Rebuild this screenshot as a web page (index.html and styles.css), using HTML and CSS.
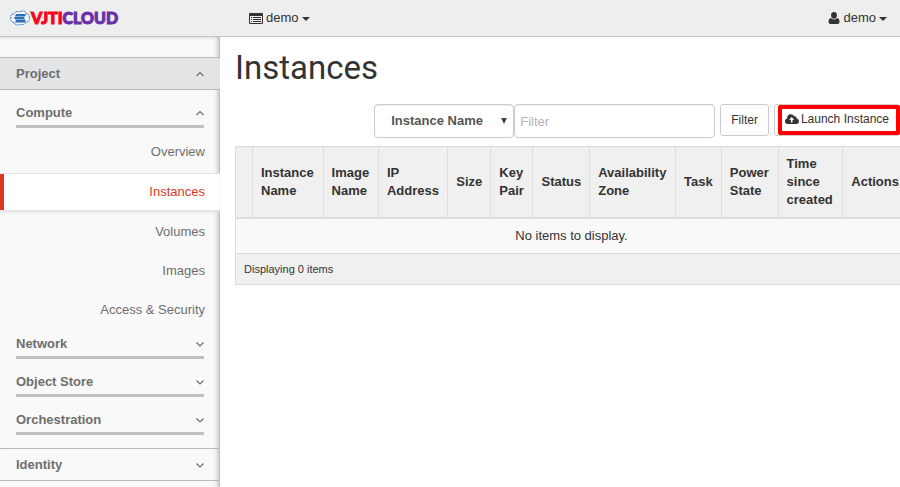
FILE: index.html
```html
<!DOCTYPE html>
<html lang="en">
<head>
<meta charset="utf-8">
<title>Instances</title>
<link rel="stylesheet" href="styles.css">
</head>
<body>
<header class="topbar">
  <a class="brand" href="#">
    <svg class="brand-mark" viewBox="0 0 20 16" width="20" height="16" aria-hidden="true">
      <path d="M4 12.500C1 12 0 10 1 8C0 5 2 4 4 4C5 1 8 1 10 2C12 0 16 1 16 3.500C19 4 20 6 19 8C20 10 18 12.500 16 12.500C14 15 11 15 10 14C8 16 5 15 4 12.500Z" fill="#f4f8fc" stroke="#3f78b5" stroke-dasharray="2 .6"/>
      <path d="M6 4h10l-1 2.500H5zM4 7h10l1 2.500H5zM6 10h10l-1 2.500H5z" fill="#2d6db3"/>
    </svg>
    <span class="brand-name"><span class="brand-red">VJTI</span><span class="brand-purple">CLOUD</span></span>
  </a>
  <button class="menu" type="button">
    <svg viewBox="0 0 14 11" width="14" height="11" aria-hidden="true">
      <path fill="#333" fill-rule="evenodd" d="M1 0H13Q14 0 14 1V10Q14 11 13 11H1Q0 11 0 10V1Q0 0 1 0ZM1 3V10H13V3Z"/>
      <path fill="#333" d="M2 4h1v1H2zM4 4h8v1H4zM2 6h1v1H2zM4 6h8v1H4zM2 8h1v1H2zM4 8h8v1H4z"/>
    </svg>
    demo <span class="caret"></span>
  </button>
  <button class="menu menu-user" type="button">
    <svg viewBox="0 0 12 12" width="12" height="12" aria-hidden="true">
      <path fill="#333" d="M6 0C8 0 9 1.500 9 3.300C9 5.200 7.700 6.800 6 6.800S3 5.200 3 3.300C3 1.500 4 0 6 0ZM3 6Q6 9 9 6C11 6.500 11.500 8 11.500 10Q11.500 12 9.500 12H2.500Q.5 12 .5 10C.5 8 1 6.500 3 6Z"/>
    </svg>
    demo <span class="caret"></span>
  </button>
</header>
<div class="layout">
  <nav class="sidebar">
    <button class="panel open" type="button">Project
      <svg class="chevron" viewBox="0 0 8 6" width="8" height="6" aria-hidden="true"><path d="M.5 5L4 1.500L7.500 5"/></svg>
    </button>
    <button class="group" type="button">Compute
      <svg class="chevron" viewBox="0 0 8 6" width="8" height="6" aria-hidden="true"><path d="M.5 5L4 1.500L7.500 5"/></svg>
    </button>
    <ul class="links">
      <li><a href="#">Overview</a></li>
      <li><a class="active" href="#" aria-current="page">Instances</a></li>
      <li><a href="#">Volumes</a></li>
      <li><a href="#">Images</a></li>
      <li><a href="#">Access &amp; Security</a></li>
    </ul>
    <button class="group" type="button">Network
      <svg class="chevron" viewBox="0 0 8 6" width="8" height="6" aria-hidden="true"><path d="M.5 1.500L4 5L7.500 1.500"/></svg>
    </button>
    <button class="group" type="button">Object Store
      <svg class="chevron" viewBox="0 0 8 6" width="8" height="6" aria-hidden="true"><path d="M.5 1.500L4 5L7.500 1.500"/></svg>
    </button>
    <button class="group" type="button">Orchestration
      <svg class="chevron" viewBox="0 0 8 6" width="8" height="6" aria-hidden="true"><path d="M.5 1.500L4 5L7.500 1.500"/></svg>
    </button>
    <button class="panel identity" type="button">Identity
      <svg class="chevron" viewBox="0 0 8 6" width="8" height="6" aria-hidden="true"><path d="M.5 1.500L4 5L7.500 1.500"/></svg>
    </button>
  </nav>
  <main class="content">
    <h1>Instances</h1>
    <form class="toolbar">
      <div class="field-select">
        <select aria-label="Filter by"><option>Instance Name</option></select>
        <span class="arrow" aria-hidden="true"></span>
      </div>
      <input class="query" type="text" placeholder="Filter" aria-label="Filter">
      <button class="btn filter" type="button">Filter</button>
      <div class="launch">
        <button class="btn" type="button">
          <svg viewBox="0 0 14 10" width="14" height="10" aria-hidden="true">
            <path fill="#333" fill-rule="evenodd" d="M3 10C1 10 0 8.700 0 7.200C0 5.800 .8 5 2 4.500C2 2 3.500 .2 5.700 .2C7.400 .2 8.600 1.100 9.200 2.500C10.500 2 11.700 3 11.500 4.500C13 4.800 14 5.800 14 7.300C14 8.900 12.900 10 11.300 10ZM6.700 3L4 5.700H5.900V8.500H7.500V5.700H9.400Z"/>
          </svg>
          Launch Instance
        </button>
        <span class="highlight"></span>
      </div>
    </form>
    <table>
      <thead>
        <tr>
          <th></th><th>Instance Name</th><th>Image Name</th><th>IP Address</th><th>Size</th><th>Key Pair</th><th>Status</th><th>Availability Zone</th><th>Task</th><th>Power State</th><th>Time since created</th><th>Actions</th>
        </tr>
      </thead>
      <tbody><tr><td class="empty" colspan="12">No items to display.</td></tr></tbody>
      <tfoot><tr><td colspan="12">Displaying 0 items</td></tr></tfoot>
    </table>
  </main>
</div>
</body>
</html>
```
FILE: styles.css
```css
* { box-sizing: border-box; }
body {
  margin: 0;
  height: 100vh;
  display: flex;
  flex-direction: column;
  overflow: hidden;
  background: #fff;
  color: #333;
  font: 13px/18px "Liberation Sans", Arial, sans-serif;
}
button, input, select { font: inherit; color: inherit; margin: 0; }
a { color: inherit; text-decoration: none; }

.topbar {
  display: flex;
  align-items: center;
  height: 37px;
  padding: 0 13px 0 10px;
  background: #eee;
  border-bottom: 1px solid #c3c3c3;
}
.brand { display: flex; align-items: center; width: 239px; }
.brand-name {
  margin-left: 1px;
  font: 900 16px/20px Lato, sans-serif;
  -webkit-text-stroke: 1px currentColor;
}
.brand-red { color: #f5051c; }
.brand-purple { color: #6b2fa8; }
.menu {
  display: flex;
  align-items: center;
  gap: 3px;
  padding: 0;
  border: 0;
  background: none;
}
.menu-user { margin-left: auto; }
.caret {
  border: 4px solid transparent;
  border-top-color: #333;
  border-bottom: 0;
  margin-top: 2px;
}

.layout { display: flex; flex: 1; min-height: 0; }
.sidebar {
  flex: 0 0 220px;
  margin-bottom: -10px;
  padding-top: 20px;
  background: #f9f9f9;
  color: #6e6e6e;
  box-shadow: inset -1px 0 #bfbfbf, inset -3px 0 5px -1px #bbb;
}
.panel, .group {
  display: flex;
  align-items: center;
  justify-content: space-between;
  font-weight: bold;
  text-align: left;
}
.panel {
  width: 100%;
  height: 33px;
  padding: 0 16px;
  border: solid #b8b9ba;
  border-width: 1px 0;
  background: none;
}
.panel.open { background: #e3e4e6; }
.group {
  width: calc(100% - 32px);
  height: 38px;
  margin: 0 16px;
  padding: 10px 0 0;
  border: 0;
  border-bottom: 3px solid #c0c0c0;
  background: none;
}
.identity { margin-top: 13px; }
.chevron { fill: none; stroke: #6e6e6e; stroke-width: 1.2px; }
.links { list-style: none; margin: 0; padding: 4px 0 0; text-align: right; }
.links a { display: block; padding: 10px 15px; line-height: 19px; }
.links li:last-child a { padding-bottom: 2px; }
.links .active {
  margin: 2px 0 1px;
  padding: 8px 15px 9px;
  border: solid #e3e3e3;
  border-width: 1px 0;
  background: linear-gradient(to right, #dc3826 4px, #fff 4px);
  color: #dc3826;
  box-shadow: 0 2px 3px -1px #ddd;
}

.content { flex: 1; min-width: 0; padding: 11px 0 0 15px; overflow: hidden; }
h1 { margin: 0 0 16px; font: 400 33px/40px Roboto, sans-serif; }
.toolbar { display: flex; align-items: flex-start; justify-content: flex-end; margin-bottom: 8px; }
.field-select { position: relative; width: 140px; }
.field-select select {
  width: 100%;
  height: 34px;
  padding: 0 16px;
  border: 1px solid #ccc;
  border-radius: 4px;
  background: #fff;
  color: #555;
  font-weight: bold;
  appearance: none;
  box-shadow: inset 0 1px 1px #eee;
}
.arrow {
  position: absolute;
  top: 14px;
  right: 7px;
  border: 3px solid transparent;
  border-top: 6px solid #444;
  border-bottom: 0;
}
.query {
  flex: 0 1 201px;
  min-width: 0;
  height: 34px;
  padding: 0 5px;
  border: 1px solid #ccc;
  border-radius: 4px;
  box-shadow: inset 0 1px 1px #eee;
}
.query::placeholder { color: #b5b5b5; opacity: 1; }
.btn {
  display: flex;
  align-items: center;
  gap: 2px;
  height: 32px;
  padding: 0 10px;
  border: 1px solid #ccc;
  border-radius: 3px;
  background: #fff;
  font-size: 12px;
  white-space: nowrap;
}
.filter { margin: 0 5px; }
.launch { position: relative; }
.launch .btn { padding-bottom: 2px; }
.highlight { position: absolute; inset: 1px 0 1px 4px; border: 4px solid #f00; border-radius: 2px; pointer-events: none; }

table {
  width: calc(100% + 8px);
  border-collapse: collapse;
  border: 1px solid #ddd;
}
th, td { padding: 8px; text-align: left; }
th {
  border: 1px solid #ddd;
  border-bottom-width: 2px;
  background: #f0f0f0;
}
.empty { background: #f9f9f9; text-align: center; }
tfoot td { border-top: 1px solid #ddd; background: #f0f0f0; font-size: 11px; line-height: 14px; }
```
